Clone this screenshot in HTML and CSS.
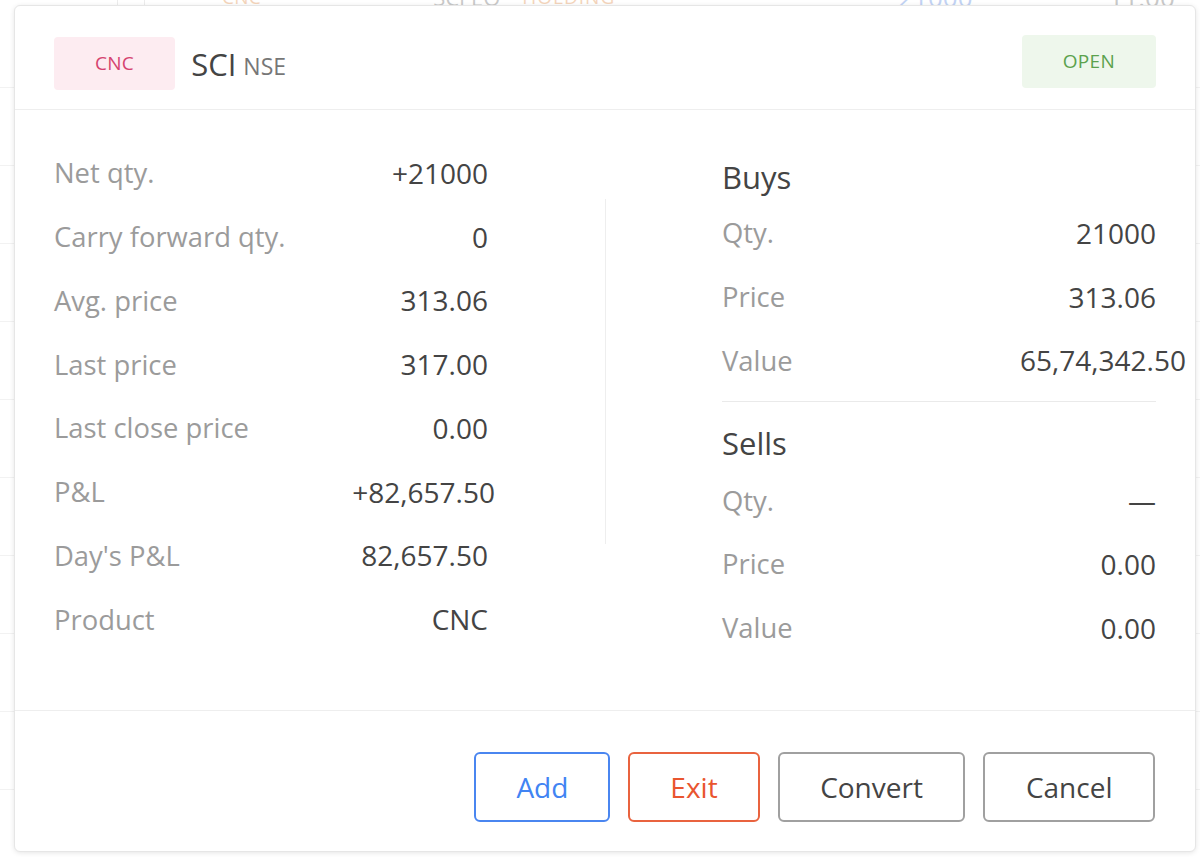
FILE: index.html
```html
<!DOCTYPE html>
<html lang="en">
<head>
<meta charset="utf-8">
<title>SCI NSE position</title>
<link rel="stylesheet" href="styles.css">
</head>
<body>
<div class="backdrop">
  <div class="bg-head">
    <div class="bg-cell bg-c1"></div>
    <div class="bg-cell bg-c2"></div>
    <span class="bg-txt bg-orange bg-cnc">CNC</span>
    <span class="bg-txt bg-gray bg-sym">SCI EQ</span>
    <span class="bg-txt bg-orange bg-hold">HOLDING</span>
    <span class="bg-txt bg-blue bg-qty">21000</span>
    <span class="bg-txt bg-gray bg-avg">11.00</span>
  </div>
  <div class="bg-row"></div>
  <div class="bg-row"></div>
  <div class="bg-row"></div>
  <div class="bg-row"></div>
  <div class="bg-row"></div>
  <div class="bg-row"></div>
  <div class="bg-row"></div>
  <div class="bg-row"></div>
  <div class="bg-row"></div>
  <div class="bg-row"></div>
</div>

<div class="modal">
  <div class="modal-header">
    <span class="badge badge-cnc">CNC</span>
    <span class="symbol">SCI</span>
    <span class="exchange">NSE</span>
    <span class="badge badge-open">OPEN</span>
  </div>

  <div class="modal-body">
    <div class="col col-left">
      <div class="row"><span class="label">Net qty.</span><span class="value">+21000</span></div>
      <div class="row"><span class="label">Carry forward qty.</span><span class="value">0</span></div>
      <div class="row"><span class="label">Avg. price</span><span class="value">313.06</span></div>
      <div class="row"><span class="label">Last price</span><span class="value">317.00</span></div>
      <div class="row"><span class="label">Last close price</span><span class="value">0.00</span></div>
      <div class="row"><span class="label">P&amp;L</span><span class="value value-pnl">+82,657.50</span></div>
      <div class="row"><span class="label">Day's P&amp;L</span><span class="value">82,657.50</span></div>
      <div class="row"><span class="label">Product</span><span class="value">CNC</span></div>
    </div>

    <div class="col-sep"><div class="vline"></div></div>

    <div class="col col-right">
      <div class="group-title">Buys</div>
      <div class="row"><span class="label">Qty.</span><span class="value">21000</span></div>
      <div class="row"><span class="label">Price</span><span class="value">313.06</span></div>
      <div class="row"><span class="label">Value</span><span class="value value-wide">65,74,342.50</span></div>
      <div class="hline"></div>
      <div class="group-title group-sells">Sells</div>
      <div class="row"><span class="label">Qty.</span><span class="value">—</span></div>
      <div class="row"><span class="label">Price</span><span class="value">0.00</span></div>
      <div class="row"><span class="label">Value</span><span class="value">0.00</span></div>
    </div>
  </div>

  <div class="modal-footer">
    <button class="btn btn-blue">Add</button>
    <button class="btn btn-red">Exit</button>
    <button class="btn btn-gray">Convert</button>
    <button class="btn btn-gray">Cancel</button>
  </div>
</div>
</body>
</html>
```

FILE: styles.css
```css
html, body {
  margin: 0;
  padding: 0;
}

body {
  width: 1200px;
  height: 858px;
  overflow: hidden;
  background: #ffffff;
  font-family: "Open Sans", "Noto Sans", "DejaVu Sans", sans-serif;
  position: relative;
}

/* ---------- faded page behind the dialog ---------- */
.backdrop {
  display: flex;
  flex-direction: column;
}

.bg-head {
  display: flex;
  align-items: flex-end;
  height: 26px;
  margin-top: -16px;
}

.bg-head > * {
  flex-shrink: 0;
}

.bg-cell {
  height: 26px;
  border-right: 1px solid #ececec;
}

.bg-c1 { width: 117px; }
.bg-c2 { width: 26px; }

.bg-txt {
  line-height: 26px;
  opacity: 0.45;
  white-space: nowrap;
}

.bg-orange { color: #e8a36b; }
.bg-gray { color: #888888; }
.bg-blue { color: #7a9ee8; }

.bg-cnc { margin-left: 77px; font-size: 19px; letter-spacing: 0.3px; }
.bg-sym { margin-left: 172px; font-size: 22px; }
.bg-hold { margin-left: 22px; font-size: 19px; letter-spacing: 1px; }
.bg-qty { margin-left: 283px; font-size: 26px; }
.bg-avg { margin-left: 136px; font-size: 26px; }

.bg-row {
  height: 77px;
  border-bottom: 1px solid #f2f2f2;
}

/* ---------- dialog ---------- */
.modal {
  position: absolute;
  left: 14px;
  top: 5px;
  width: 1182px;
  height: 847px;
  box-sizing: border-box;
  background: #ffffff;
  border: 1px solid #e6e6e6;
  border-radius: 6px;
  box-shadow: 0 1px 5px rgba(0, 0, 0, 0.10);
  display: flex;
  flex-direction: column;
}

.modal-header {
  display: flex;
  align-items: center;
  height: 104px;
  box-sizing: border-box;
  padding: 12px 39px 0 39px;
  border-bottom: 1px solid #eeeeee;
}

.badge {
  display: inline-block;
  height: 53px;
  line-height: 53px;
  padding: 0 41px;
  border-radius: 4px;
  font-size: 19px;
  letter-spacing: 0.3px;
}

.badge-cnc {
  background: #fdecf1;
  color: #d5436f;
}

.badge-open {
  margin-left: auto;
  margin-top: -4px;
  background: #eef7ec;
  color: #5ba24e;
}

.symbol {
  margin-left: 16px;
  font-size: 31px;
  color: #444444;
}

.exchange {
  margin-left: 7px;
  margin-top: 4px;
  font-size: 23px;
  color: #777777;
}

.modal-body {
  flex: 1;
  display: grid;
  grid-template-columns: 434px 1fr 434px;
  padding: 0 39px;
}

.col-left {
  padding-top: 31px;
}

.col-right {
  padding-top: 47px;
}

.row {
  display: flex;
  justify-content: space-between;
  align-items: center;
  height: 63.75px;
  font-size: 28px;
  white-space: nowrap;
}

.label {
  color: #9b9b9b;
  font-size: 27.4px;
}

.value {
  color: #444444;
}

.value-pnl {
  margin-right: -7px;
}

.value-wide {
  margin-right: -30px;
}

.group-title {
  height: 40px;
  line-height: 40px;
  font-size: 31px;
  color: #444444;
  margin-bottom: 4px;
}

.group-sells {
  margin-bottom: 5px;
}

.hline {
  height: 1px;
  background: #eaeaea;
  margin: 9px 0 21px 0;
}

.col-sep {
  display: flex;
  justify-content: center;
}

.vline {
  width: 1px;
  height: 345px;
  margin-top: 89px;
  background: #eeeeee;
}

.modal-footer {
  height: 141px;
  box-sizing: border-box;
  border-top: 1px solid #eeeeee;
  display: flex;
  justify-content: flex-end;
  align-items: flex-start;
  gap: 18px;
  padding: 41px 40px 0 39px;
}

.btn {
  height: 70px;
  padding: 0 40px;
  background: #ffffff;
  border: 2px solid #9b9b9b;
  border-radius: 6px;
  font-family: "Open Sans", "Noto Sans", "DejaVu Sans", sans-serif;
  font-size: 28px;
  color: #444444;
  cursor: pointer;
}

.btn-blue {
  border-color: #4a86f0;
  color: #4184f3;
}

.btn-red {
  border-color: #e9633f;
  color: #e9552f;
}

.btn-gray {
  padding: 0 40.5px;
  border-color: #a0a0a0;
  color: #444444;
}
```
